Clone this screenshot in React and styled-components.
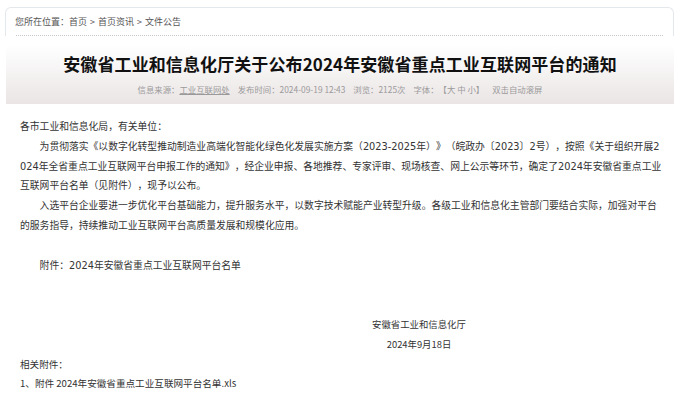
import styled, { createGlobalStyle } from 'styled-components';

const GlobalStyle = createGlobalStyle`
  html, body {
    margin: 0;
    padding: 0;
    background: #fff;
  }
  body {
    font-family: "Noto Sans CJK SC", "Noto Sans", sans-serif;
    color: #333;
    text-spacing-trim: space-all;
  }
`;

const Page = styled.div`
  width: 680px;
  padding-top: 7px;
`;

const CrumbBox = styled.div`
  margin: 0 6px 0 5px;
  height: 28px;
  border: 1px solid #e3e8ec;
  border-bottom: none;
  border-radius: 6px 6px 0 0;
  padding: 0 10px 0 8px;
  display: flex;
  flex-direction: column;
`;

const Crumb = styled.div`
  flex: 1;
  display: flex;
  align-items: center;
  font-size: 9px;
  color: #555;
  gap: 3px;
  padding-left: 1px;
`;

const Dotted = styled.div`
  border-bottom: 1px dotted #c8c8c8;
  margin-left: 2px;
`;

const Banner = styled.div`
  margin: 10px 6px 0 6px;
  height: 58px;
  background: linear-gradient(180deg, #ffffff 0%, #f3f0f0 55%, #ebe5e5 100%);
  display: flex;
  flex-direction: column;
  align-items: center;
`;

const Title = styled.h1`
  margin: 7px 0 0;
  font-size: 17px;
  font-weight: 700;
  color: #111;
  letter-spacing: 0.1px;
  line-height: 22px;
`;

const Meta = styled.div`
  margin-top: 8px;
  font-size: 8.4px;
  color: #9a9a9a;
  display: flex;
  gap: 8px;
  line-height: 12px;
`;

const Source = styled.span`
  text-decoration: underline;
`;

const Body = styled.div`
  width: 642px;
  padding: 13px 0 0 20px;
  font-size: 9.8px;
  line-height: 19.8px;
  color: #333;
`;

const P = styled.p`
  margin: 0;
  min-height: 19.8px;
  font-family: "DejaVu Sans", "Noto Sans CJK SC", sans-serif;
  text-indent: ${({ $indent }) => ($indent ? '2em' : '0')};
  word-break: break-all;
`;

const Sign = styled.div`
  width: 200px;
  margin-left: 299px;
  display: flex;
  flex-direction: column;
  align-items: center;
  font-size: 9.4px;
`;

const Small = styled.p`
  margin: 0;
  font-size: 9.6px;
`;

export default function App() {
  return (
    <Page>
      <GlobalStyle />
      <CrumbBox>
        <Crumb>
          <span>您所在位置：首页</span>
          <span>&gt;</span>
          <span>首页资讯</span>
          <span>&gt;</span>
          <span>文件公告</span>
        </Crumb>
        <Dotted />
      </CrumbBox>

      <Banner>
        <Title>安徽省工业和信息化厅关于公布2024年安徽省重点工业互联网平台的通知</Title>
        <Meta>
          <span>
            信息来源：<Source>工业互联网处</Source>
          </span>
          <span>发布时间：2024-09-19 12:43</span>
          <span>浏览：2125次</span>
          <span>字体：【大 中 小】</span>
          <span>双击自动滚屏</span>
        </Meta>
      </Banner>

      <Body>
        <P>各市工业和信息化局，有关单位：</P>
        <P $indent>
          为贯彻落实《以数字化转型推动制造业高端化智能化绿色化发展实施方案（2023-2025年）》（皖政办〔2023〕2号），按照《关于组织开展2024年全省重点工业互联网平台申报工作的通知》，经企业申报、各地推荐、专家评审、现场核查、网上公示等环节，确定了2024年安徽省重点工业互联网平台名单（见附件），现予以公布。
        </P>
        <P $indent>
          入选平台企业要进一步优化平台基础能力，提升服务水平，以数字技术赋能产业转型升级。各级工业和信息化主管部门要结合实际，加强对平台的服务指导，持续推动工业互联网平台高质量发展和规模化应用。
        </P>
        <P />
        <P $indent>附件：2024年安徽省重点工业互联网平台名单</P>
        <P />
        <P />
        <Sign>
          <span>安徽省工业和信息化厅</span>
          <span>2024年9月18日</span>
        </Sign>
        <Small>相关附件：</Small>
        <Small>1、附件 2024年安徽省重点工业互联网平台名单.xls</Small>
      </Body>
    </Page>
  );
}
